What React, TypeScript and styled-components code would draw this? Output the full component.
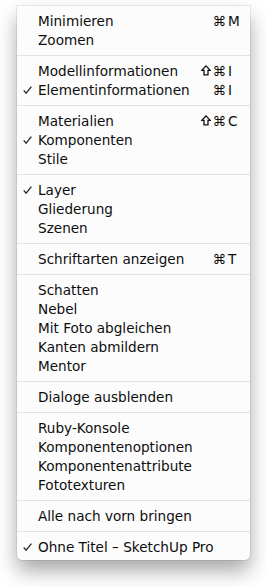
import React from "react";
import styled, { createGlobalStyle } from "styled-components";

const Global = createGlobalStyle`
  html, body { margin: 0; padding: 0; background: #ffffff; }
  body { font-family: "DejaVu Sans", "Liberation Sans", sans-serif; }
`;

const Page = styled.div`
  width: 267px;
  height: 587px;
  padding-top: 6px;
  box-sizing: border-box;
`;

const Menu = styled.div`
  margin: 0 17px 0 17px;
  width: 233px;
  box-sizing: border-box;
  padding: 5px 0 4px;
  background: #fcfcfc;
  border-radius: 0 0 5px 5px;
  box-shadow: 0 0 0 1px rgba(0, 0, 0, 0.07), 0 11px 20px rgba(0, 0, 0, 0.34);
  display: flex;
  flex-direction: column;
`;

const Row = styled.div`
  display: flex;
  align-items: center;
  height: 19px;
  padding-right: 10px;
  font-size: 13.6px;
  color: #0d0d0d;
  white-space: nowrap;
`;

const CheckCell = styled.span`
  flex: none;
  width: 21px;
  height: 19px;
  display: flex;
  align-items: center;
  padding-left: 6px;
  box-sizing: border-box;
  padding-top: 1px;
`;

const Label = styled.span`
  flex: 1;
`;

const Mods = styled.span`
  flex: none;
  display: flex;
  align-items: center;
  gap: 1px;
`;

const Key = styled.span`
  flex: none;
  width: 12px;
  padding-left: 2px;
`;

const Separator = styled.div`
  height: 12px;
  display: flex;
  align-items: center;
  &::after {
    content: "";
    display: block;
    width: 100%;
    height: 1px;
    background: #e3e3e3;
  }
`;

const Check = () => (
  <svg width="9" height="8" viewBox="0 0 9 8">
    <path d="M0.7 4.3 L3.1 7.2 L8.4 0.6" fill="none" stroke="#2a2a2a" strokeWidth="1.3" />
  </svg>
);

const Shift = () => (
  <svg width="10" height="11" viewBox="0 0 10 11">
    <path
      d="M5 0.9 L9.2 5.4 L7 5.4 L7 9.8 L3 9.8 L3 5.4 L0.8 5.4 Z"
      fill="none"
      stroke="#111"
      strokeWidth="1.3"
      strokeLinejoin="miter"
    />
  </svg>
);

type Item =
  | { label: string; checked?: boolean; shift?: boolean; key?: string }
  | "sep";

const items: Item[] = [
  { label: "Minimieren", key: "M" },
  { label: "Zoomen" },
  "sep",
  { label: "Modellinformationen", shift: true, key: "I" },
  { label: "Elementinformationen", checked: true, key: "I" },
  "sep",
  { label: "Materialien", shift: true, key: "C" },
  { label: "Komponenten", checked: true },
  { label: "Stile" },
  "sep",
  { label: "Layer", checked: true },
  { label: "Gliederung" },
  { label: "Szenen" },
  "sep",
  { label: "Schriftarten anzeigen", key: "T" },
  "sep",
  { label: "Schatten" },
  { label: "Nebel" },
  { label: "Mit Foto abgleichen" },
  { label: "Kanten abmildern" },
  { label: "Mentor" },
  "sep",
  { label: "Dialoge ausblenden" },
  "sep",
  { label: "Ruby-Konsole" },
  { label: "Komponentenoptionen" },
  { label: "Komponentenattribute" },
  { label: "Fototexturen" },
  "sep",
  { label: "Alle nach vorn bringen" },
  "sep",
  { label: "Ohne Titel – SketchUp Pro", checked: true },
];

export default function App() {
  return (
    <Page>
      <Global />
      <Menu>
        {items.map((it, i) =>
          it === "sep" ? (
            <Separator key={i} />
          ) : (
            <Row key={i}>
              <CheckCell>{it.checked ? <Check /> : null}</CheckCell>
              <Label>{it.label}</Label>
              {it.key ? (
                <>
                  <Mods>
                    {it.shift ? <Shift /> : null}
                    <span>⌘</span>
                  </Mods>
                  <Key>{it.key}</Key>
                </>
              ) : null}
            </Row>
          )
        )}
      </Menu>
    </Page>
  );
}
